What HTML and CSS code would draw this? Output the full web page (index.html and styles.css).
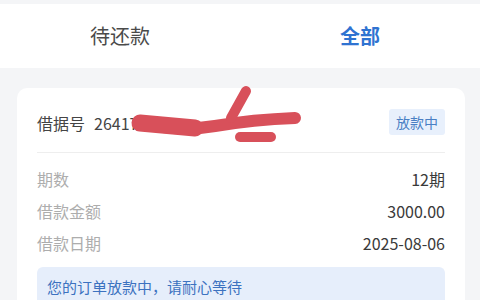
FILE: index.html
```html
<!DOCTYPE html>
<html lang="zh-CN">
<head>
<meta charset="utf-8">
<link rel="stylesheet" href="styles.css">
</head>
<body>
<div class="page">
  <div class="tabs">
    <div class="tab">待还款</div>
    <div class="tab active">全部</div>
  </div>
  <div class="card">
    <div class="card-head">
      <div class="loan-no"><span class="label">借据号</span><span class="num">264174012</span></div>
      <div class="badge">放款中</div>
    </div>
    <div class="divider"></div>
    <div class="rows">
      <div class="row"><span class="k">期数</span><span class="v">12期</span></div>
      <div class="row"><span class="k">借款金额</span><span class="v">3000.00</span></div>
      <div class="row"><span class="k">借款日期</span><span class="v">2025-08-06</span></div>
    </div>
    <div class="notice">您的订单放款中，请耐心等待</div>
  </div>
  <svg class="scribble" width="480" height="300" viewBox="0 0 480 300">
    <path d="M138 122 C160 128, 185 131, 215 126 S270 119, 295 118" fill="none" stroke="#d8505a" stroke-width="12" stroke-linecap="round"/>
    <path d="M140 123 L195 128" fill="none" stroke="#d8505a" stroke-width="17" stroke-linecap="round"/>
    <path d="M246 91 L231 118" fill="none" stroke="#d8505a" stroke-width="10" stroke-linecap="round"/>
    <path d="M240 137 L271 137" fill="none" stroke="#d8505a" stroke-width="10" stroke-linecap="round"/>
  </svg>
</div>
</body>
</html>
```
FILE: styles.css
```css
* { box-sizing: border-box; }
html, body { margin: 0; padding: 0; }
body {
  background: #f4f5f7;
  font-family: "Noto Sans CJK SC", "Noto Sans", sans-serif;
  width: 480px;
  height: 300px;
  overflow: hidden;
}
.page {
  position: relative;
  padding-top: 4px;
  height: 300px;
  overflow: hidden;
}
.tabs {
  display: flex;
  background: #fff;
  height: 64px;
}
.tab {
  flex: 1;
  display: flex;
  align-items: center;
  justify-content: center;
  font-size: 20px;
  color: #4a4a4a;
  padding-bottom: 1px;
}
.tab.active {
  color: #2f73d1;
  font-weight: 700;
}
.card {
  margin: 20px 15px 0 17px;
  background: #fff;
  border-radius: 10px 10px 0 0;
  padding: 21px 20px 0 20px;
  height: 212px;
}
.card-head {
  display: flex;
  align-items: center;
  justify-content: space-between;
  height: 26px;
}
.loan-no {
  font-size: 16px;
  color: #444;
  line-height: 20px;
  padding-top: 2px;
}
.loan-no .num { margin-left: 9px; }
.badge {
  background: #e8f0fc;
  color: #4a7fc4;
  font-size: 14px;
  height: 26px;
  line-height: 26px;
  padding: 0 7px;
  border-radius: 3px;
}
.divider {
  height: 1px;
  background: #eeeeee;
  margin-top: 17px;
}
.rows {
  margin-top: 10px;
}
.row {
  display: flex;
  justify-content: space-between;
  height: 32px;
  line-height: 32px;
  font-size: 16px;
}
.row .k { color: #adadad; }
.row .v { color: #3a3a3a; }
.notice {
  margin-top: 8px;
  background: #e6eefb;
  border-radius: 6px 6px 0 0;
  padding: 10px 10px 0 10px;
  line-height: 20px;
  font-size: 15px;
  color: #3c72c0;
  height: 33px;
}
.scribble {
  position: absolute;
  left: 0;
  top: 0;
  pointer-events: none;
}
```
